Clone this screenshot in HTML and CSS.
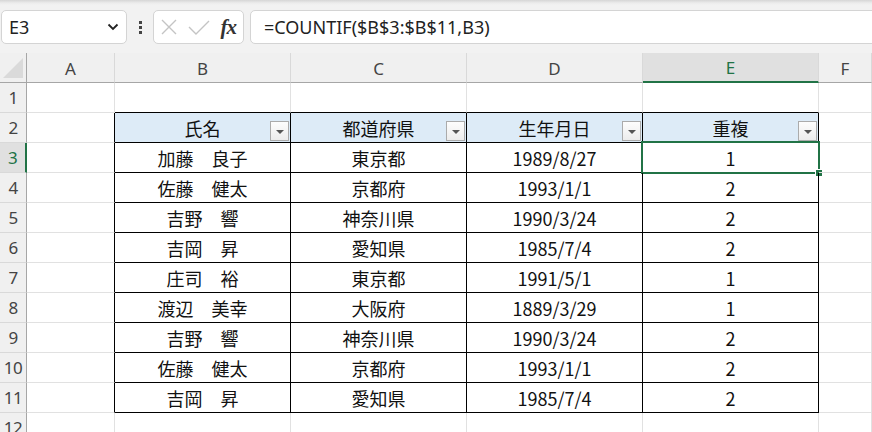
FILE: index.html
```html
<!DOCTYPE html>
<html lang="ja">
<head>
    <meta charset="UTF-8">
    <title>COUNTIF</title>
    <link rel="stylesheet" href="styles.css">
</head>
<body>
    <div class="toolbar">
        <div class="name-box">
            <span>E3</span>
            <svg class="chev" width="12" height="8" viewBox="0 0 12 8"><path d="M1.5 1.5 L6 6 L10.5 1.5" fill="none" stroke="#222" stroke-width="1.8"/></svg>
        </div>
        <div class="dots"><i></i><i></i><i></i></div>
        <div class="fx-box">
            <svg width="18" height="18" viewBox="0 0 18 18"><path d="M2 2 L16 16 M16 2 L2 16" stroke="#c4c4c4" stroke-width="1.4"/></svg>
            <svg width="22" height="18" viewBox="0 0 22 18"><path d="M1 9 L8 16 L21 3" fill="none" stroke="#c4c4c4" stroke-width="1.4"/></svg>
            <span class="fx">fx</span>
        </div>
        <div class="formula">=COUNTIF($B$3:$B$11,B3)</div>
    </div>

    <div class="sheet">
        <div class="hd corner"><span class="tri"></span></div>
        <div class="hd col">A</div>
        <div class="hd col">B</div>
        <div class="hd col">C</div>
        <div class="hd col">D</div>
        <div class="hd col sel-col">E</div>
        <div class="hd col">F</div>

        <div class="hd row">1</div>
        <div class="c"></div><div class="c t-top"></div><div class="c t-top"></div><div class="c t-top"></div><div class="c t-top"></div><div class="c"></div>

        <div class="hd row">2</div>
        <div class="c t-left"></div>
        <div class="c tb th">氏名<span class="flt"></span></div>
        <div class="c tb th">都道府県<span class="flt"></span></div>
        <div class="c tb th">生年月日<span class="flt"></span></div>
        <div class="c tb th">重複<span class="flt"></span></div>
        <div class="c"></div>

        <div class="hd row sel-row">3</div>
        <div class="c t-left"></div>
        <div class="c tb">加藤　良子</div><div class="c tb">東京都</div><div class="c tb">1989/8/27</div>
        <div class="c tb active">1<span class="handle"></span></div>
        <div class="c"></div>

        <div class="hd row">4</div>
        <div class="c t-left"></div>
        <div class="c tb">佐藤　健太</div><div class="c tb">京都府</div><div class="c tb">1993/1/1</div><div class="c tb">2</div>
        <div class="c"></div>

        <div class="hd row">5</div>
        <div class="c t-left"></div>
        <div class="c tb">吉野　響</div><div class="c tb">神奈川県</div><div class="c tb">1990/3/24</div><div class="c tb">2</div>
        <div class="c"></div>

        <div class="hd row">6</div>
        <div class="c t-left"></div>
        <div class="c tb">吉岡　昇</div><div class="c tb">愛知県</div><div class="c tb">1985/7/4</div><div class="c tb">2</div>
        <div class="c"></div>

        <div class="hd row">7</div>
        <div class="c t-left"></div>
        <div class="c tb">庄司　裕</div><div class="c tb">東京都</div><div class="c tb">1991/5/1</div><div class="c tb">1</div>
        <div class="c"></div>

        <div class="hd row">8</div>
        <div class="c t-left"></div>
        <div class="c tb">渡辺　美幸</div><div class="c tb">大阪府</div><div class="c tb">1889/3/29</div><div class="c tb">1</div>
        <div class="c"></div>

        <div class="hd row">9</div>
        <div class="c t-left"></div>
        <div class="c tb">吉野　響</div><div class="c tb">神奈川県</div><div class="c tb">1990/3/24</div><div class="c tb">2</div>
        <div class="c"></div>

        <div class="hd row">10</div>
        <div class="c t-left"></div>
        <div class="c tb">佐藤　健太</div><div class="c tb">京都府</div><div class="c tb">1993/1/1</div><div class="c tb">2</div>
        <div class="c"></div>

        <div class="hd row">11</div>
        <div class="c t-left"></div>
        <div class="c tb">吉岡　昇</div><div class="c tb">愛知県</div><div class="c tb">1985/7/4</div><div class="c tb">2</div>
        <div class="c"></div>

        <div class="hd row">12</div>
        <div class="c"></div><div class="c"></div><div class="c"></div><div class="c"></div><div class="c"></div><div class="c"></div>
    </div>
</body>
</html>
```

FILE: styles.css
```css
:root {
    --grid: #e1e1e1;
    --head-bg: #f0f0f0;
    --head-line: #d9d9d9;
    --head-edge: #a6a6a6;
    --sel-bg: #e0e0e0;
    --green: #217346;
    --table-head: #ddebf7;
}

body {
    margin: 0;
    font-family: "Noto Sans CJK JP", sans-serif;
    color: #000;
    background: #fff;
    overflow: hidden;
}

/* formula bar */
.toolbar {
    height: 53px;
    box-sizing: border-box;
    padding-top: 10px;
    display: flex;
    align-items: flex-start;
    background: linear-gradient(#d6d6d6 0, #ececec 3px, #f2f2f2 5px);
}

.name-box,
.fx-box,
.formula {
    height: 34px;
    box-sizing: border-box;
    background: #fff;
    border: 1px solid #d4d4d4;
    border-radius: 5px;
    display: flex;
    align-items: center;
}

.name-box {
    margin-left: 1px;
    width: 126px;
    padding: 0 7px 0 7px;
    justify-content: space-between;
    font-family: "Noto Sans", sans-serif;
    font-size: 18px;
    color: #222;
}

.dots {
    width: 26px;
    height: 34px;
    display: flex;
    flex-direction: column;
    align-items: center;
    justify-content: center;
    gap: 2px;
}

.dots i {
    width: 3px;
    height: 3px;
    background: #444;
}

.fx-box {
    width: 91px;
    padding: 0 6px 0 6px;
    justify-content: space-between;
}

.fx {
    font-family: "Liberation Serif", serif;
    font-style: italic;
    font-weight: bold;
    font-size: 21px;
    color: #333;
    padding-right: 1px;
    letter-spacing: -1px;
}

.formula {
    flex: 1;
    margin-left: 6px;
    margin-right: -6px;
    padding-left: 13px;
    font-family: "Noto Sans", sans-serif;
    font-size: 18px;
    color: #222;
}

/* sheet grid */
.sheet {
    display: grid;
    grid-template-columns: 27px 88px 176px 176px 176px 176px 1fr;
    grid-auto-rows: 30px;
}

.sheet > div {
    box-sizing: border-box;
    border-right: 1px solid var(--grid);
    border-bottom: 1px solid var(--grid);
    position: relative;
    display: flex;
    align-items: center;
    justify-content: center;
}

.sheet > .hd {
    background: var(--head-bg);
    border-right-color: var(--head-line);
    border-bottom-color: var(--head-line);
    font-family: "Noto Sans", sans-serif;
    font-size: 17px;
    color: #444;
}

.sheet > .col {
    border-bottom-color: var(--head-edge);
    padding-top: 1px;
}

.sheet > .row {
    border-right-color: var(--head-edge);
    font-size: 17px;
    letter-spacing: -0.5px;
}

.sheet > .corner {
    border-bottom-color: var(--head-edge);
    border-right-color: var(--head-edge);
}

.tri {
    position: absolute;
    left: 3px;
    bottom: 4px;
    width: 0;
    height: 0;
    border-left: 20px solid transparent;
    border-bottom: 20px solid #dadada;
}

.sheet > .sel-col {
    background: var(--sel-bg);
    color: var(--green);
    border-bottom: 2px solid var(--green);
}

.sheet > .sel-row {
    background: var(--sel-bg);
    color: var(--green);
    border-right: 2px solid var(--green);
}

/* table */
.sheet > .c {
    font-size: 18px;
    color: #111;
}

.sheet > .t-top {
    border-bottom-color: #000;
}

.sheet > .t-left {
    border-right-color: #000;
}

.sheet > .tb {
    border-right-color: #000;
    border-bottom-color: #000;
}

.sheet > .th {
    background: var(--table-head);
}

.flt {
    position: absolute;
    right: 1px;
    bottom: 1px;
    width: 19px;
    height: 20px;
    box-sizing: border-box;
    border: 1px solid #ababab;
    background: linear-gradient(#fdfdfd, #ececec);
}

.flt::after {
    content: "";
    position: absolute;
    left: 5px;
    top: 8px;
    border-left: 4px solid transparent;
    border-right: 4px solid transparent;
    border-top: 4px solid #555;
}

.active::before {
    content: "";
    position: absolute;
    left: -2px;
    top: -2px;
    right: -2px;
    bottom: -2px;
    border: 2px solid var(--green);
}

.handle {
    position: absolute;
    right: -5px;
    bottom: -5px;
    width: 6px;
    height: 6px;
    background: var(--green);
    border: 1px solid #fff;
}
```
